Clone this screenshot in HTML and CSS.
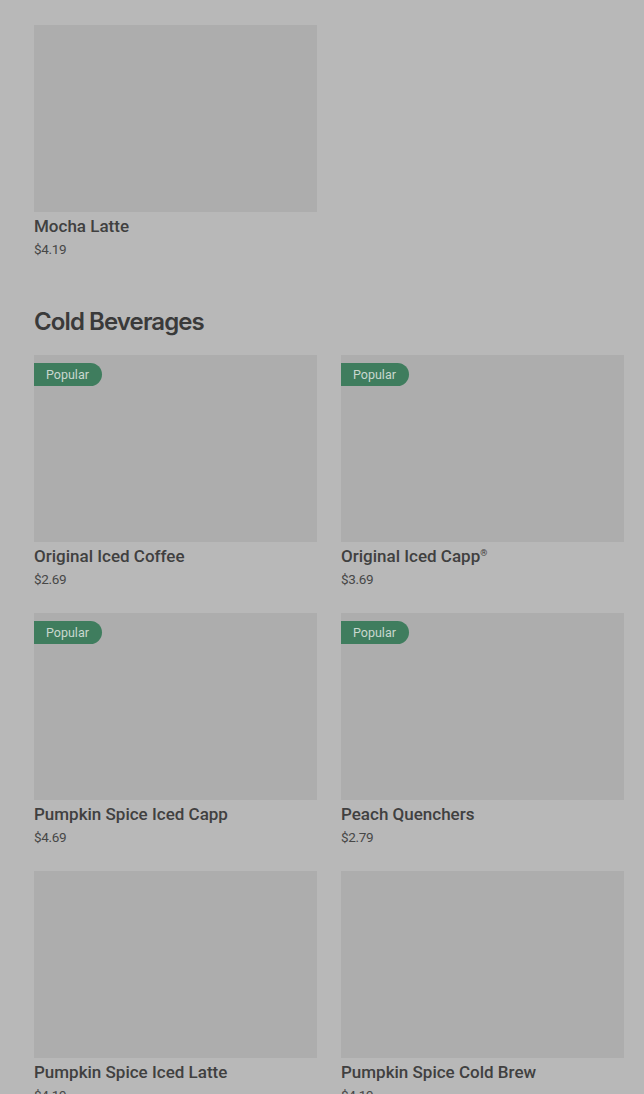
FILE: index.html
```html
<!DOCTYPE html>
<html>
<head>
    <title>Menu</title>
    <link rel="stylesheet" href="styles.css">
</head>
<body>
    <div class="menu">
        <section class="category">
            <div class="product-grid">
                <div class="product">
                    <div class="product-image"></div>
                    <div class="product-name">Mocha Latte</div>
                    <div class="product-price">$4.19</div>
                </div>
            </div>
        </section>

        <section class="category">
            <h2 class="category-title">Cold Beverages</h2>
            <div class="product-grid">
                <div class="product">
                    <div class="product-image"><span class="badge">Popular</span></div>
                    <div class="product-name">Original Iced Coffee</div>
                    <div class="product-price">$2.69</div>
                </div>
                <div class="product">
                    <div class="product-image"><span class="badge">Popular</span></div>
                    <div class="product-name">Original Iced Capp<sup>®</sup></div>
                    <div class="product-price">$3.69</div>
                </div>
                <div class="product">
                    <div class="product-image"><span class="badge">Popular</span></div>
                    <div class="product-name">Pumpkin Spice Iced Capp</div>
                    <div class="product-price">$4.69</div>
                </div>
                <div class="product">
                    <div class="product-image"><span class="badge">Popular</span></div>
                    <div class="product-name">Peach Quenchers</div>
                    <div class="product-price">$2.79</div>
                </div>
                <div class="product">
                    <div class="product-image"></div>
                    <div class="product-name">Pumpkin Spice Iced Latte</div>
                    <div class="product-price">$4.19</div>
                </div>
                <div class="product">
                    <div class="product-image"></div>
                    <div class="product-name">Pumpkin Spice Cold Brew</div>
                    <div class="product-price">$4.19</div>
                </div>
            </div>
        </section>
    </div>
</body>
</html>
```

FILE: styles.css
```css
body {
    margin: 0;
    background: #b8b8b8;
    font-family: Roboto, 'Liberation Sans', sans-serif;
    color: #3a3a3a;
    overflow: hidden;
}

.menu {
    padding: 25px 20px 0 34px;
}

.category {
    margin-bottom: 46px;
}

.category-title {
    font-family: Inter, 'Noto Sans', sans-serif;
    font-size: 24px;
    font-weight: 600;
    letter-spacing: -0.9px;
    line-height: 32px;
    margin: 0 0 17px;
    color: #3a3a3a;
}

.product-grid {
    display: grid;
    grid-template-columns: 283px 283px;
    column-gap: 24px;
    row-gap: 23px;
}

.product-image {
    position: relative;
    height: 187px;
    background: #adadad;
}

.badge {
    position: absolute;
    top: 8px;
    left: 0;
    height: 23px;
    padding: 0 13px 0 12px;
    line-height: 23px;
    font-size: 12.5px;
    color: #c9d8cf;
    background: #3f7d5e;
    border-radius: 0 12px 12px 0;
}

.product-name {
    margin-top: 2px;
    font-size: 17px;
    font-weight: 500;
    line-height: 24px;
    color: #404040;
}

.product-name sup {
    font-size: 9px;
    vertical-align: 6px;
    line-height: 0;
}

.product-price {
    font-size: 13.5px;
    line-height: 22px;
    color: #474747;
    letter-spacing: -0.3px;
}
```
